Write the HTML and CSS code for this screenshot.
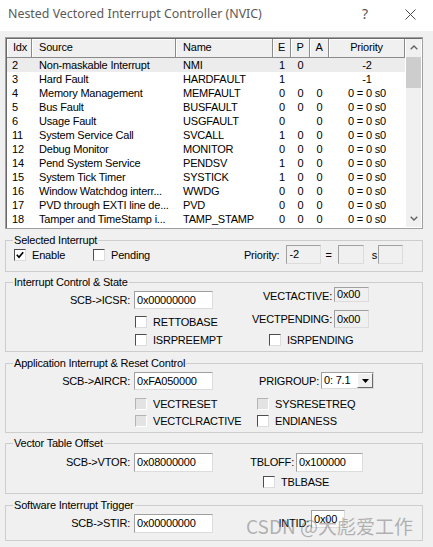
FILE: index.html
```html
<!DOCTYPE html>
<html lang="en">
<head>
<meta charset="utf-8">
<title>Nested Vectored Interrupt Controller (NVIC)</title>
<link rel="stylesheet" href="styles.css">
</head>
<body>
<header class="titlebar">
  <span class="title">Nested Vectored Interrupt Controller (NVIC)</span>
  <span class="tb-help">?</span>
  <svg class="tb-close" width="11" height="11" viewBox="0 0 11 11"><path d="M0.5 0.5L10.5 10.5M10.5 0.5L0.5 10.5" stroke="#4a4a4a" stroke-width="1" fill="none"/></svg>
</header>
<main class="main">
  <div class="list">
    <div class="table">
      <div class="thead">
        <div class="th c-idx">Idx</div>
        <div class="th c-src">Source</div>
        <div class="th c-name">Name</div>
        <div class="th c-e ctr">E</div>
        <div class="th c-p ctr">P</div>
        <div class="th c-a ctr">A</div>
        <div class="th c-pri ctr">Priority</div>
      </div>
      <div class="tr sel"><span class="td c-idx">2</span><span class="td c-src">Non-maskable Interrupt</span><span class="td c-name">NMI</span><span class="td c-e ctr">1</span><span class="td c-p ctr">0</span><span class="td c-a ctr"></span><span class="td c-pri ctr">-2</span></div>
      <div class="tr"><span class="td c-idx">3</span><span class="td c-src">Hard Fault</span><span class="td c-name">HARDFAULT</span><span class="td c-e ctr">1</span><span class="td c-p ctr"></span><span class="td c-a ctr"></span><span class="td c-pri ctr">-1</span></div>
      <div class="tr"><span class="td c-idx">4</span><span class="td c-src">Memory Management</span><span class="td c-name">MEMFAULT</span><span class="td c-e ctr">0</span><span class="td c-p ctr">0</span><span class="td c-a ctr">0</span><span class="td c-pri ctr">0 = 0 s0</span></div>
      <div class="tr"><span class="td c-idx">5</span><span class="td c-src">Bus Fault</span><span class="td c-name">BUSFAULT</span><span class="td c-e ctr">0</span><span class="td c-p ctr">0</span><span class="td c-a ctr">0</span><span class="td c-pri ctr">0 = 0 s0</span></div>
      <div class="tr"><span class="td c-idx">6</span><span class="td c-src">Usage Fault</span><span class="td c-name">USGFAULT</span><span class="td c-e ctr">0</span><span class="td c-p ctr"></span><span class="td c-a ctr">0</span><span class="td c-pri ctr">0 = 0 s0</span></div>
      <div class="tr"><span class="td c-idx">11</span><span class="td c-src">System Service Call</span><span class="td c-name">SVCALL</span><span class="td c-e ctr">1</span><span class="td c-p ctr">0</span><span class="td c-a ctr">0</span><span class="td c-pri ctr">0 = 0 s0</span></div>
      <div class="tr"><span class="td c-idx">12</span><span class="td c-src">Debug Monitor</span><span class="td c-name">MONITOR</span><span class="td c-e ctr">0</span><span class="td c-p ctr">0</span><span class="td c-a ctr">0</span><span class="td c-pri ctr">0 = 0 s0</span></div>
      <div class="tr"><span class="td c-idx">14</span><span class="td c-src">Pend System Service</span><span class="td c-name">PENDSV</span><span class="td c-e ctr">1</span><span class="td c-p ctr">0</span><span class="td c-a ctr">0</span><span class="td c-pri ctr">0 = 0 s0</span></div>
      <div class="tr"><span class="td c-idx">15</span><span class="td c-src">System Tick Timer</span><span class="td c-name">SYSTICK</span><span class="td c-e ctr">1</span><span class="td c-p ctr">0</span><span class="td c-a ctr">0</span><span class="td c-pri ctr">0 = 0 s0</span></div>
      <div class="tr"><span class="td c-idx">16</span><span class="td c-src">Window Watchdog interr...</span><span class="td c-name">WWDG</span><span class="td c-e ctr">0</span><span class="td c-p ctr">0</span><span class="td c-a ctr">0</span><span class="td c-pri ctr">0 = 0 s0</span></div>
      <div class="tr"><span class="td c-idx">17</span><span class="td c-src">PVD through EXTI line de...</span><span class="td c-name">PVD</span><span class="td c-e ctr">0</span><span class="td c-p ctr">0</span><span class="td c-a ctr">0</span><span class="td c-pri ctr">0 = 0 s0</span></div>
      <div class="tr"><span class="td c-idx">18</span><span class="td c-src">Tamper and TimeStamp i...</span><span class="td c-name">TAMP_STAMP</span><span class="td c-e ctr">0</span><span class="td c-p ctr">0</span><span class="td c-a ctr">0</span><span class="td c-pri ctr">0 = 0 s0</span></div>
    </div>
    <div class="vscroll">
      <div class="sb-btn"><svg width="8" height="5" viewBox="0 0 8 5"><path d="M0.7 4.3L4 1L7.3 4.3" stroke="#606060" stroke-width="1.3" fill="none"/></svg></div>
      <div class="sb-track"><div class="sb-thumb"></div></div>
      <div class="sb-btn"><svg width="8" height="5" viewBox="0 0 8 5"><path d="M0.7 0.7L4 4L7.3 0.7" stroke="#606060" stroke-width="1.3" fill="none"/></svg></div>
    </div>
  </div>

  <section class="group g-sel">
    <span class="group-title">Selected Interrupt</span>
    <label class="check w-enable"><span class="box"><svg width="8" height="8" viewBox="0 0 8 8"><path d="M0.8 3.8L3 6.2L7.2 1.2" stroke="#000" stroke-width="1.7" fill="none"/></svg></span>Enable</label>
    <label class="check"><span class="box"></span>Pending</label>
    <div class="prio">
      <span>Priority:</span>
      <span class="input ro prio-val">-2</span>
      <span class="eq">=</span>
      <span class="input ro prio-b1"></span>
      <span class="s-lbl">s</span>
      <span class="input ro prio-b2"></span>
    </div>
  </section>

  <section class="group g-icsr">
    <span class="group-title">Interrupt Control &amp; State</span>
    <div class="grid">
      <span class="lbl dy4">SCB-&gt;ICSR:</span>
      <span class="input dy4">0x00000000</span>
      <span class="lbl lbl2">VECTACTIVE:</span>
      <span class="input ro h15">0x00</span>

      <span></span>
      <label class="check dy7 ml1"><span class="box"></span>RETTOBASE</label>
      <span class="lbl lbl2 dy1">VECTPENDING:</span>
      <span class="input ro dy1">0x00</span>

      <span></span>
      <label class="check dy5 ml1"><span class="box"></span>ISRPREEMPT</label>
      <label class="check dy5 span2 ml56"><span class="box"></span>ISRPENDING</label>
    </div>
  </section>

  <section class="group g-aircr">
    <span class="group-title">Application Interrupt &amp; Reset Control</span>
    <div class="grid">
      <span class="lbl dy4">SCB-&gt;AIRCR:</span>
      <span class="input dy4">0xFA050000</span>
      <span class="lbl lbl2 dy4">PRIGROUP:</span>
      <div class="select dy4"><span class="select-val">0: 7.1</span><span class="select-btn"><svg width="7" height="4" viewBox="0 0 7 4"><path d="M0 0H7L3.5 4Z" fill="#000"/></svg></span></div>

      <span></span>
      <label class="check dy6 ml1"><span class="box dis"></span>VECTRESET</label>
      <label class="check dy6 span2 ml44"><span class="box dis"></span>SYSRESETREQ</label>

      <span></span>
      <label class="check dy1 ml1"><span class="box dis"></span>VECTCLRACTIVE</label>
      <label class="check dy1 span2 ml44"><span class="box"></span>ENDIANESS</label>
    </div>
  </section>

  <section class="group g-vtor">
    <span class="group-title">Vector Table Offset</span>
    <div class="grid">
      <span class="lbl lh19 dy5">SCB-&gt;VTOR:</span>
      <span class="input h19 dy5">0x08000000</span>
      <span class="lbl lbl2 lh19 dy5">TBLOFF:</span>
      <span class="input h19 dy5">0x100000</span>

      <span></span>
      <span></span>
      <label class="check dy2 span2 ml50"><span class="box"></span>TBLBASE</label>
    </div>
  </section>

  <section class="group g-stir">
    <span class="group-title">Software Interrupt Trigger</span>
    <div class="grid">
      <span class="lbl lh19 dy4">SCB-&gt;STIR:</span>
      <span class="input h19 dy4">0x00000000</span>
      <span class="lbl lbl2 lh19 dy4">INTID:</span>
      <span class="input">0x00</span>
    </div>
  </section>
</main>
<div class="watermark">CSDN @大彪爱工作</div>
</body>
</html>
```

FILE: styles.css
```css
* { box-sizing: border-box; }
html, body { margin: 0; padding: 0; }
body {
  width: 433px;
  height: 547px;
  overflow: hidden;
  position: relative;
  background: #f0f0f0;
  font-family: "Liberation Sans", Arial, sans-serif;
  font-size: 11px;
  letter-spacing: -0.2px;
  color: #000;
}

/* title bar */
.titlebar {
  height: 31px;
  background: #fff;
  display: flex;
  align-items: flex-start;
  padding: 6px 17px 0 8px;
}
.title {
  flex: 1;
  font-family: "Noto Sans", sans-serif;
  font-size: 12.4px;
  line-height: 16px;
  color: #5a5a5a;
  letter-spacing: 0;
}
.tb-help {
  font-family: "Noto Sans", sans-serif;
  font-size: 14px;
  line-height: 16px;
  color: #555;
  letter-spacing: 0;
  margin-right: 37px;
}
.tb-close { margin-top: 3px; }

.main { padding: 6px 10px 0 5px; }

/* list view */
.list {
  height: 192px;
  display: flex;
  background: #fff;
  border: 1px solid #a0a0a0;
  padding: 1px;
  box-shadow: inset 1px 1px #696969;
}
.table { width: 398px; }
.thead, .tr { display: flex; }
.thead { height: 19px; }
.th {
  height: 19px;
  line-height: 17px;
  background: #f0f0f0;
  border-right: 1px solid #8a8a8a;
  border-bottom: 1px solid #8a8a8a;
  box-shadow: inset 1px 1px #fff;
  padding-left: 7px;
  white-space: nowrap;
}
.th.c-idx { padding-left: 6px; }
.tr { height: 14px; line-height: 14px; }
.tr.sel { background: #ececec; }
.td { padding-left: 7px; white-space: nowrap; overflow: hidden; }
.td.c-idx { padding-left: 5px; }
.th.ctr, .td.ctr { padding-left: 0; text-align: center; }
.c-idx { width: 25px; }
.c-src { width: 144px; }
.c-name { width: 97px; }
.c-e { width: 18px; }
.c-p { width: 19px; }
.c-a { width: 19px; }
.c-pri { width: 76px; }

.vscroll {
  width: 16px;
  background: #f0f0f0;
  border-left: 1px solid #fff;
  display: flex;
  flex-direction: column;
}
.sb-btn { height: 17px; display: flex; align-items: center; justify-content: center; }
.sb-track { flex: 1; padding-top: 1px; }
.sb-thumb { height: 31px; background: #cdcdcd; }

/* group boxes */
.group { position: relative; border: 1px solid #cdcdcd; }
.group-title {
  position: absolute;
  left: 7px;
  top: -7px;
  padding: 0 1px;
  line-height: 13px;
  background: #f0f0f0;
  white-space: nowrap;
}
.grid { display: grid; align-items: start; }

.g-sel {
  margin-top: 11px;
  height: 32px;
  display: flex;
  align-items: center;
  padding: 4px 19px 7px 8px;
}
.g-icsr { margin-top: 10px; padding: 4px 0 5px; }
.g-icsr .grid { grid-template-columns: 128px 79px 121px 35px; grid-template-rows: 22px 20px 17px; }
.g-aircr { margin-top: 11px; padding: 4px 0 4px; }
.g-aircr .grid { grid-template-columns: 128px 79px 108px 53px; grid-template-rows: 24px 22px 14px; }
.g-vtor { margin-top: 10px; padding: 4px 0 3px; }
.g-vtor .grid { grid-template-columns: 128px 79px 83px 67px; grid-template-rows: 26px 16px; }
.g-stir { margin-top: 11px; padding: 4px 0 6px; }
.g-stir .grid { grid-template-columns: 128px 79px 98px 34px; grid-template-rows: 24px; }

/* labels & fields */
.lbl { line-height: 18px; text-align: right; padding-right: 4px; white-space: nowrap; }
.lbl2 { padding-right: 2px; }
.lh19 { line-height: 19px; }

.input {
  display: block;
  height: 18px;
  line-height: 16px;
  padding-left: 2px;
  background: #fff;
  border: 1px solid;
  border-color: #a0a0a0 #dcdcdc #dcdcdc #a0a0a0;
  white-space: nowrap;
  overflow: hidden;
}
.input.ro { background: #f0f0f0; }
.h15 { height: 15px; line-height: 13px; }
.h19 { height: 19px; line-height: 17px; }

.check {
  display: flex;
  align-items: center;
  gap: 6px;
  height: 12px;
  line-height: 12px;
  white-space: nowrap;
}
.box {
  flex: none;
  width: 12px;
  height: 12px;
  background: #fff;
  border: 1px solid;
  border-color: #4d4d4d #dcdcdc #dcdcdc #4d4d4d;
  display: flex;
  align-items: center;
  justify-content: center;
}
.box.dis { background: #e3e3e3; border-color: #b4b4b4 #fff #fff #b4b4b4; }

.select {
  display: flex;
  height: 17px;
  background: #fff;
  border: 1px solid;
  border-color: #a0a0a0 #dcdcdc #dcdcdc #a0a0a0;
}
.select-val { flex: 1; padding-left: 2px; line-height: 15px; }
.select-btn {
  width: 16px;
  background: #f0f0f0;
  border: 1px solid;
  border-color: #fff #696969 #696969 #fff;
  display: flex;
  align-items: center;
  justify-content: center;
}

/* selected interrupt row */
.w-enable { width: 79px; }
.prio { margin-left: auto; display: flex; align-items: center; }
.prio .input { height: 19px; line-height: 17px; }
.prio-val { width: 35px; margin-left: 7px; }
.eq { margin-left: 4px; }
.prio-b1 { width: 26px; margin-left: 6px; }
.s-lbl { margin-left: 8px; }
.prio-b2 { width: 25px; margin-left: 1px; }

/* offsets */
.dy1 { margin-top: 1px; }
.dy2 { margin-top: 2px; }
.dy4 { margin-top: 4px; }
.dy5 { margin-top: 5px; }
.dy6 { margin-top: 6px; }
.dy7 { margin-top: 7px; }
.ml1 { margin-left: 1px; }
.ml44 { margin-left: 44px; }
.ml50 { margin-left: 50px; }
.ml56 { margin-left: 56px; }
.span2 { grid-column: span 2; }

.watermark {
  position: absolute;
  left: 246px;
  top: 515px;
  font-family: "Noto Sans CJK SC", sans-serif;
  font-size: 19px;
  line-height: 22px;
  letter-spacing: 0;
  color: rgba(120, 120, 120, 0.55);
  white-space: nowrap;
  pointer-events: none;
}
```
